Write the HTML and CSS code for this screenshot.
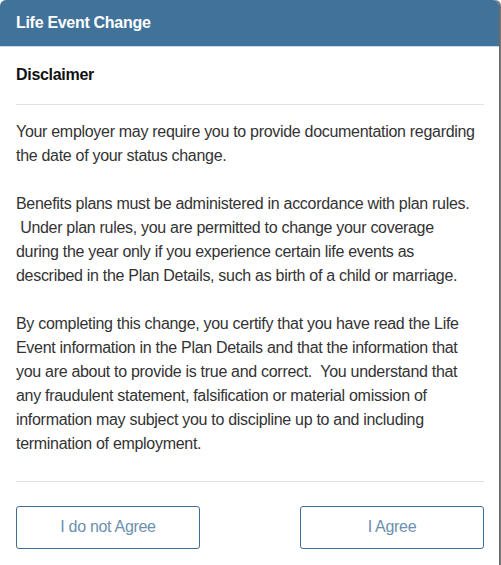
FILE: index.html
```html
<!DOCTYPE html>
<html>
<head>
<meta charset="utf-8">
<link rel="stylesheet" href="styles.css">
</head>
<body>
<div class="modal">
  <div class="modal-header">Life Event Change</div>
  <div class="modal-body">
    <h2 class="section-title">Disclaimer</h2>
    <div class="content">
      <p>Your employer may require you to provide documentation regarding<br>the date of your status change.</p>
      <p>Benefits plans must be administered in accordance with plan rules.<br>&nbsp;Under plan rules, you are permitted to change your coverage<br>during the year only if you experience certain life events as<br>described in the Plan Details, such as birth of a child or marriage.</p>
      <p>By completing this change, you certify that you have read the Life<br>Event information in the Plan Details and that the information that<br>you are about to provide is true and correct. &nbsp;You understand that<br>any fraudulent statement, falsification or material omission of<br>information may subject you to discipline up to and including<br>termination of employment.</p>
    </div>
    <div class="actions">
      <button class="btn">I do not Agree</button>
      <button class="btn">I Agree</button>
    </div>
  </div>
</div>
</body>
</html>
```
FILE: styles.css
```css
html, body {
  margin: 0;
  padding: 0;
  background: #ffffff;
}
body {
  font-family: "Liberation Sans", Arial, sans-serif;
  width: 501px;
  height: 565px;
  overflow: hidden;
}
.modal {
  width: 499px;
  min-height: 570px;
  background: #ffffff;
  border-radius: 6px 6px 0 0;
  box-shadow: 2px 0 1px rgba(80, 80, 80, 0.85);
  overflow: hidden;
}
.modal-header {
  height: 46px;
  line-height: 46px;
  padding: 0 16px;
  background: #41729a;
  border-bottom: 1px solid #c5d9e8;
  color: #ffffff;
  font-weight: bold;
  font-size: 16px;
  letter-spacing: -0.3px;
}
.modal-body {
  padding: 0 15px 0 16px;
}
.section-title {
  margin: 0;
  height: 58px;
  line-height: 54px;
  font-size: 16px;
  font-weight: bold;
  color: #111111;
  letter-spacing: -0.3px;
  border-bottom: 1px solid #e2e2e2;
  box-sizing: border-box;
  padding-top: 1px;
}
.content {
  padding: 15px 0 25px;
  border-bottom: 1px solid #e2e2e2;
}
.content p {
  margin: 0 0 24px;
  font-size: 16px;
  line-height: 24px;
  color: #333333;
  letter-spacing: -0.3px;
  white-space: nowrap;
}
.content p:last-child {
  margin-bottom: 0;
}
.actions {
  display: flex;
  justify-content: space-between;
  padding-top: 24px;
}
.btn {
  width: 184px;
  height: 43px;
  background: #ffffff;
  border: 1px solid #3f6d96;
  border-radius: 3px;
  color: #6b8fb0;
  font-family: "Liberation Sans", Arial, sans-serif;
  font-size: 16px;
  letter-spacing: -0.3px;
  padding: 0 0 1px;
}
```
